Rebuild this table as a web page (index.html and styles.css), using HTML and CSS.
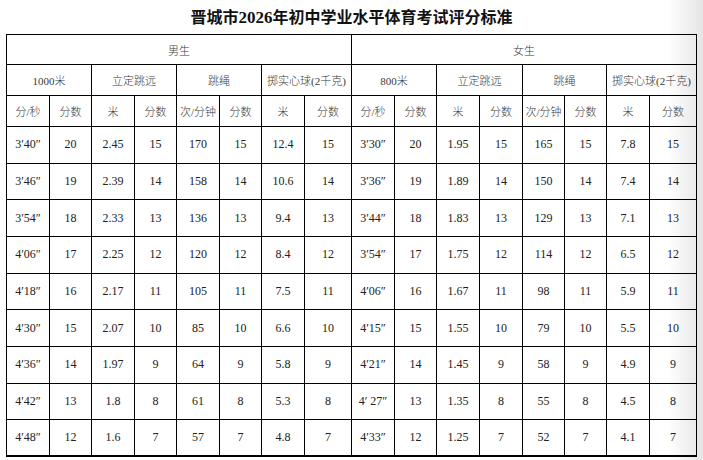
FILE: index.html
```html
<!DOCTYPE html>
<html lang="zh">
<head>
<meta charset="utf-8">
<title>晋城市2026年初中学业水平体育考试评分标准</title>
<link rel="stylesheet" href="styles.css">
</head>
<body>
<div class="page">
  <h1 class="title">晋城市<span class="num">2026</span>年初中学业水平体育考试评分标准</h1>
  <table class="score">
    <colgroup>
      <col class="c43"><col class="c42"><col class="c43"><col class="c42"><col class="c43"><col class="c42"><col class="c43"><col class="c47">
      <col class="c43"><col class="c42"><col class="c43"><col class="c43"><col class="c42"><col class="c42"><col class="c43"><col class="c47">
    </colgroup>
    <thead>
      <tr class="r1">
        <th colspan="8">男生</th>
        <th colspan="8">女生</th>
      </tr>
      <tr class="r2">
        <th colspan="2">1000米</th>
        <th colspan="2">立定跳远</th>
        <th colspan="2">跳绳</th>
        <th colspan="2">掷实心球(2千克)</th>
        <th colspan="2">800米</th>
        <th colspan="2">立定跳远</th>
        <th colspan="2">跳绳</th>
        <th colspan="2">掷实心球(2千克)</th>
      </tr>
      <tr class="r3">
        <th>分/秒</th><th>分数</th><th>米</th><th>分数</th><th>次/分钟</th><th>分数</th><th>米</th><th>分数</th>
        <th>分/秒</th><th>分数</th><th>米</th><th>分数</th><th>次/分钟</th><th>分数</th><th>米</th><th>分数</th>
      </tr>
    </thead>
    <tbody>
      <tr><td>3′40″</td><td>20</td><td>2.45</td><td>15</td><td>170</td><td>15</td><td>12.4</td><td>15</td><td>3′30″</td><td>20</td><td>1.95</td><td>15</td><td>165</td><td>15</td><td>7.8</td><td>15</td></tr>
      <tr><td>3′46″</td><td>19</td><td>2.39</td><td>14</td><td>158</td><td>14</td><td>10.6</td><td>14</td><td>3′36″</td><td>19</td><td>1.89</td><td>14</td><td>150</td><td>14</td><td>7.4</td><td>14</td></tr>
      <tr><td>3′54″</td><td>18</td><td>2.33</td><td>13</td><td>136</td><td>13</td><td>9.4</td><td>13</td><td>3′44″</td><td>18</td><td>1.83</td><td>13</td><td>129</td><td>13</td><td>7.1</td><td>13</td></tr>
      <tr><td>4′06″</td><td>17</td><td>2.25</td><td>12</td><td>120</td><td>12</td><td>8.4</td><td>12</td><td>3′54″</td><td>17</td><td>1.75</td><td>12</td><td>114</td><td>12</td><td>6.5</td><td>12</td></tr>
      <tr><td>4′18″</td><td>16</td><td>2.17</td><td>11</td><td>105</td><td>11</td><td>7.5</td><td>11</td><td>4′06″</td><td>16</td><td>1.67</td><td>11</td><td>98</td><td>11</td><td>5.9</td><td>11</td></tr>
      <tr><td>4′30″</td><td>15</td><td>2.07</td><td>10</td><td>85</td><td>10</td><td>6.6</td><td>10</td><td>4′15″</td><td>15</td><td>1.55</td><td>10</td><td>79</td><td>10</td><td>5.5</td><td>10</td></tr>
      <tr><td>4′36″</td><td>14</td><td>1.97</td><td>9</td><td>64</td><td>9</td><td>5.8</td><td>9</td><td>4′21″</td><td>14</td><td>1.45</td><td>9</td><td>58</td><td>9</td><td>4.9</td><td>9</td></tr>
      <tr><td>4′42″</td><td>13</td><td>1.8</td><td>8</td><td>61</td><td>8</td><td>5.3</td><td>8</td><td>4′ 27″</td><td>13</td><td>1.35</td><td>8</td><td>55</td><td>8</td><td>4.5</td><td>8</td></tr>
      <tr><td>4′48″</td><td>12</td><td>1.6</td><td>7</td><td>57</td><td>7</td><td>4.8</td><td>7</td><td>4′33″</td><td>12</td><td>1.25</td><td>7</td><td>52</td><td>7</td><td>4.1</td><td>7</td></tr>
    </tbody>
  </table>
</div>
</body>
</html>
```
FILE: styles.css
```css
html {
  background: linear-gradient(to right, #ffffff 0, #ffffff 668px, #e4e4e4 703px);
  min-height: 100%;
}
body {
  margin: 0;
  color: #1a1a1a;
}
.page {
  width: 703px;
  height: 460px;
  overflow: hidden;
}
.title {
  margin: 0;
  height: 34px;
  line-height: 33px;
  text-align: center;
  font-family: "Noto Sans CJK SC", sans-serif;
  font-size: 16px;
  font-weight: 700;
  color: #111;
}
.title .num {
  font-family: "Liberation Serif", serif;
  font-size: 17px;
}
.score {
  margin-left: 6px;
  width: 690px;
  table-layout: fixed;
  border-collapse: collapse;
  border-bottom: 2px solid #000;
  font-family: "Liberation Serif", "Noto Sans CJK SC", serif;
  font-size: 12px;
  color: #222;
}
.c42 { width: 42px; }
.c43 { width: 43px; }
.c47 { width: 47px; }
.score th,
.score td {
  border: 1px solid #000;
  padding: 0;
  text-align: center;
  vertical-align: middle;
  font-weight: 400;
  white-space: nowrap;
  overflow: hidden;
}
.score th {
  font-family: "Liberation Serif", "Noto Sans CJK SC", serif;
  font-size: 11px;
  font-weight: 300;
  color: #3a3a3a;
}
.r1 { height: 30px; }
.r2 { height: 31px; }
.r3 { height: 31px; }
.score tbody tr { height: 36.67px; }
```
